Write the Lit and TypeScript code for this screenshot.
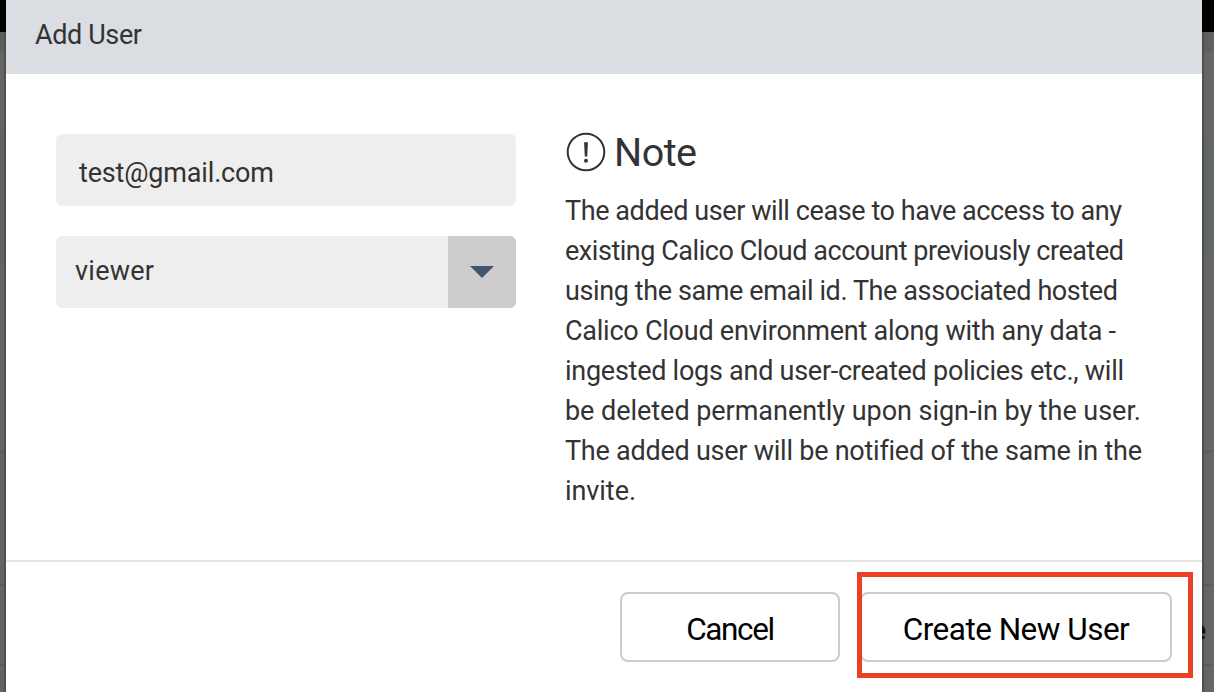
import { LitElement, html, css } from "lit";
import { customElement, property } from "lit/decorators.js";

/** One line of text whose tracking is adjusted so that it spans a given width. */
@customElement("fit-line")
class FitLine extends LitElement {
  @property() text = "";
  @property({ type: Number }) span = 0;
  @property({ type: Number }) tracking = 0;

  static styles = css`
    :host { display: block; white-space: pre; }
  `;

  firstUpdated() {
    const el = this.renderRoot.querySelector("span") as HTMLElement;
    const natural = el.getBoundingClientRect().width;
    this.tracking = (this.span - natural) / Math.max(1, this.text.length - 1);
  }

  render() {
    return html`<span style="letter-spacing:${this.tracking}px">${this.text}</span>`;
  }
}

@customElement("app-root")
class AppRoot extends LitElement {
  private lines: [string, number][] = [
    ["The added user will cease to have access to any", 557],
    ["existing Calico Cloud account previously created", 559],
    ["using the same email id. The associated hosted", 553],
    ["Calico Cloud environment along with any data -", 551],
    ["ingested logs and user-created policies etc., will", 559],
    ["be deleted permanently upon sign-in by the user.", 576],
    ["The added user will be notified of the same in the", 576],
    ["invite.", 71],
  ];

  static styles = css`
    * { box-sizing: border-box; }
    :host {
      display: flex;
      width: 1214px;
      height: 692px;
      overflow: hidden;
      background: #666;
      color: #333;
      font: 27px/40px Roboto, "Liberation Sans", sans-serif;
    }
    .edge {
      position: relative;
      flex: none;
      overflow: hidden;
      background: linear-gradient(#000 32px, #5c5c5c 32px 52px, #646463 52px 132px,
        #5f6364 132px 262px, #646463 262px 450px, #5b5b5a 450px 453px, #636362 453px 584px,
        #595959 584px 586px, #636362 586px 664px, #595959 664px 666px, #626262 666px);
    }
    .left { width: 6px; }
    .right { width: 12px; }
    .shade { height: 660px; margin-top: 32px; }
    .left .shade { background: linear-gradient(90deg, transparent 4px, #4a4b4ccc 4px); }
    .right .shade { background: linear-gradient(90deg, #4a4b4ccc 2px, transparent 2px, #8882); }
    .behind {
      position: absolute;
      right: 8px;
      top: 611px;
      color: #111;
      font-weight: 700;
    }
    .dialog {
      flex: 1;
      display: flex;
      flex-direction: column;
      background: #fff;
    }
    .head {
      height: 74px;
      padding: 15px 29px 0;
      background: #dadde2;
    }
    .body {
      height: 486px;
      display: flex;
      padding: 60px 50px 0;
      gap: 49px;
    }
    .form {
      width: 460px;
      display: flex;
      flex-direction: column;
      gap: 30px;
    }
    .field {
      height: 72px;
      border-radius: 6px;
      background: #eee;
      overflow: hidden;
    }
    .input { padding: 19px 23px; }
    .select { display: flex; justify-content: space-between; padding-left: 19px; }
    .value { padding-top: 15px; }
    .drop {
      width: 68px;
      height: 72px;
      background: #ccc;
    }
    svg { display: block; flex: none; }
    .note { display: flex; flex-direction: column; }
    .title {
      display: flex;
      height: 57px;
      gap: 8px;
      font-size: 39.5px;
    }
    .icon { margin: -2px 0 0 1px; }
    .title fit-line { margin-top: -1px; }
    .foot {
      flex: 1;
      border-top: 2px solid #e4e4e4;
      display: flex;
      justify-content: flex-end;
      gap: 20px;
      padding: 30px 30px 0 0;
    }
    .btn {
      position: relative;
      display: flex;
      justify-content: center;
      height: 70px;
      padding-top: 16px;
      border: 2px solid #ccc;
      border-radius: 8px;
      background: #fff;
      color: #000;
      font-size: 31.5px;
    }
    .cancel { width: 220px; }
    .create { width: 312px; }
    .mark {
      position: absolute;
      left: -5.5px;
      top: -22px;
      width: 336px;
      height: 105.5px;
      border: 5px solid #ec4026;
    }
  `;

  render() {
    return html`
      <div class="edge left"><div class="shade"></div></div>
      <div class="dialog">
        <div class="head"><fit-line text="Add User" span="107"></fit-line></div>
        <div class="body">
          <div class="form">
            <div class="field input"><fit-line text="test@gmail.com" span="195"></fit-line></div>
            <div class="field select">
              <fit-line class="value" text="viewer" span="79"></fit-line>
              <svg class="drop" viewBox="0 0 68 72"><path d="M22 30H46L34 42Z" fill="#44546a" /></svg>
            </div>
          </div>
          <div class="note">
            <div class="title">
              <svg class="icon" width="40" height="40" viewBox="0 0 40 40">
                <circle cx="20" cy="20" r="18.3" fill="none" stroke="#333" stroke-width="2" />
                <path d="M18.1 10.2H21.9L21.2 24.5H18.8Z" fill="#333" />
                <circle cx="20" cy="28.7" r="2" fill="#333" />
              </svg>
              <fit-line text="Note" span="83"></fit-line>
            </div>
            ${this.lines.map(([t, w]) => html`<fit-line .text=${t} .span=${w}></fit-line>`)}
          </div>
        </div>
        <div class="foot">
          <div class="btn cancel"><fit-line text="Cancel" span="89"></fit-line></div>
          <div class="btn create">
            <fit-line text="Create New User" span="227"></fit-line>
            <div class="mark"></div>
          </div>
        </div>
      </div>
      <div class="edge right"><div class="shade"></div><span class="behind">e</span></div>
    `;
  }
}
